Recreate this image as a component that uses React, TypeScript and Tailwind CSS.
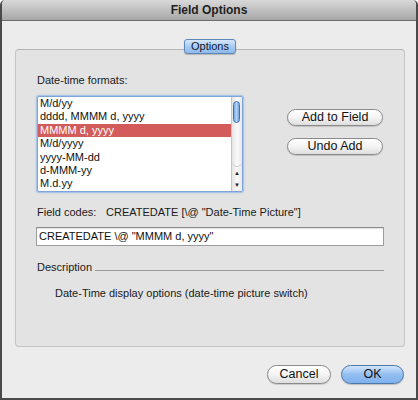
import React from 'react';

const formats = ['M/d/yy', 'dddd, MMMM d, yyyy', 'MMMM d, yyyy', 'M/d/yyyy', 'yyyy-MM-dd', 'd-MMM-yy', 'M.d.yy'];

function PillButton({ label, className = '' }: { label: string; className?: string }) {
  return (
    <div
      className={`flex items-center justify-center rounded-full border border-[#8a8a8a] bg-gradient-to-b from-[#ffffff] via-[#f4f4f4] to-[#dedede] text-[12.5px] text-[#111] shadow-[0_1px_1px_rgba(0,0,0,0.15)] ${className}`}
    >
      {label}
    </div>
  );
}

export default function App() {
  return (
    <div
      className="w-[418px] h-[400px] flex flex-col overflow-hidden rounded-t-[5px] border-x-2 border-b-2 border-[#4a4a4a] bg-[#ececec]"
      style={{ fontFamily: '"Liberation Sans", Arial, sans-serif' }}
    >
      {/* title bar */}
      <div className="h-[21px] shrink-0 flex items-center justify-center border-b border-[#6c6c6c] bg-gradient-to-b from-[#d9d9d9] to-[#a7a7a7] text-[12px] font-bold text-[#1e1e1e]">
        Field Options
      </div>

      {/* tab */}
      <div className="flex justify-center mt-[18px] relative z-10">
        <div className="w-[52px] h-[15px] ml-[2px] flex items-center justify-center rounded-[3px] border border-[#5f86b8] bg-gradient-to-b from-[#d6e7fa] via-[#aacbf0] to-[#8fb9ea] text-[11px] text-[#0d1b2e] shadow-[0_1px_1px_rgba(0,0,0,0.2)]">
          Options
        </div>
      </div>

      {/* group box */}
      <div className="ml-[13px] w-[390px] h-[298px] -mt-[5px] rounded-[4px] border border-[#c4c4c4] border-t-[#b5b5b5] bg-[#e3e3e3] pl-[21px] pr-[20px] pt-[23px] text-[11px] text-[#1a1a1a]">
        <div className="h-[14px] leading-[14px]">Date-time formats:</div>

        <div className="flex mt-[9px]">
          {/* list box */}
          <div className="w-[206px] h-[96px] border border-[#7fa5d8] rounded-[2px] shadow-[0_0_0_1px_#a9c6ea,0_0_3px_#86abdc] bg-white flex overflow-hidden">
            <div className="flex-1 flex flex-col overflow-hidden">
              {formats.map((f, i) => (
                <div
                  key={f}
                  className={`h-[13.4px] shrink-0 leading-[13.4px] pl-[2px] text-[11px] ${
                    i === 2 ? 'bg-[#d35c5a] text-white' : 'text-[#111]'
                  }`}
                >
                  {f}
                </div>
              ))}
            </div>
            {/* scrollbar */}
            <div className="w-[11px] flex flex-col border-l border-[#c4c4c4] bg-gradient-to-r from-[#e4e4e4] via-[#fafafa] to-[#e8e8e8]">
              <div className="flex-1 relative rounded-b-full border-b border-[#c8c8c8]">
                <div className="absolute left-[1px] top-[4px] w-[7px] h-[22px] rounded-full border border-[#3f72b8] bg-gradient-to-r from-[#6fa4e6] via-[#b7d4f6] to-[#6a9fe2]" />
              </div>
              <div className="h-[24px] flex flex-col items-center justify-around text-[6px] leading-[6px] text-[#222]">
                <span>▲</span>
                <span>▼</span>
              </div>
            </div>
          </div>

          <div className="ml-[44px] flex flex-col mt-[13px] gap-[12px]">
            <PillButton label="Add to Field" className="w-[96px] h-[17px]" />
            <PillButton label="Undo Add" className="w-[96px] h-[17px]" />
          </div>
        </div>

        <div className="flex mt-[13px] h-[14px] leading-[14px]">
          <span className="w-[69px]">Field codes:</span>
          <span>CREATEDATE [\@ "Date-Time Picture"]</span>
        </div>

        <div className="mt-[8px] -ml-[1px] w-[348px] h-[19px] border border-[#9c9c9c] border-t-[#8a8a8a] bg-white pl-[2px] leading-[17px] text-[11px] text-[#111] shadow-[inset_0_1px_1px_rgba(0,0,0,0.12)]">
          CREATEDATE \@ "MMMM d, yyyy"
        </div>

        <div className="mt-[14px] flex items-center h-[14px]">
          <span className="leading-[14px]">Description</span>
          <div className="flex-1 ml-[3px] mt-[7px] border-t border-[#9a9a9a]" />
        </div>

        <div className="mt-[12px] ml-[18px] h-[14px] leading-[14px]">
          Date-Time display options (date-time picture switch)
        </div>
      </div>

      {/* bottom buttons */}
      <div className="flex justify-end gap-[10px] mt-[18px] pr-[12px]">
        <PillButton label="Cancel" className="w-[64px] h-[19px]" />
        <div className="w-[63px] h-[19px] flex items-center justify-center rounded-full border border-[#4c78b0] bg-gradient-to-b from-[#d2e5fb] via-[#93bef0] to-[#7fb2ec] text-[12.5px] text-[#111] shadow-[0_1px_1px_rgba(0,0,0,0.2)]">
          OK
        </div>
      </div>
    </div>
  );
}
